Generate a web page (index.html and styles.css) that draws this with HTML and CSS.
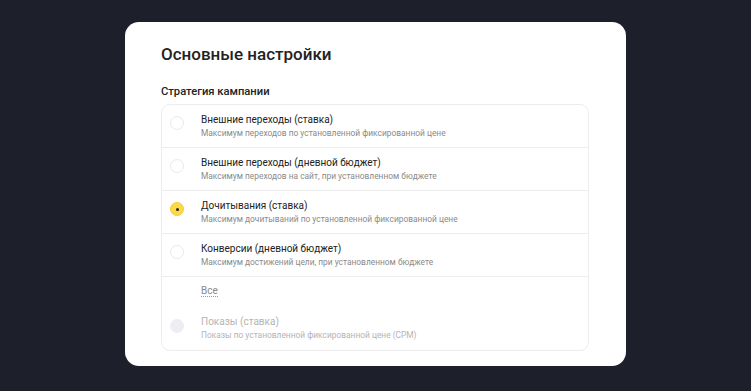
FILE: index.html
```html
<!DOCTYPE html>
<html lang="ru">
<head>
  <meta charset="UTF-8">
  <meta name="viewport" content="width=device-width, initial-scale=1.0">
  <title>Основные настройки</title>
  <link rel="stylesheet" href="styles.css">
</head>
<body>
  <div class="card">
    <h1>Основные настройки</h1>
    <div class="label">Стратегия кампании</div>

    <div class="list">
      <div class="option">
        <span class="radio"></span>
        <div class="text">
          <div class="name">Внешние переходы (ставка)</div>
          <div class="desc">Максимум переходов по установленной фиксированной цене</div>
        </div>
      </div>
      <div class="option">
        <span class="radio"></span>
        <div class="text">
          <div class="name">Внешние переходы (дневной бюджет)</div>
          <div class="desc">Максимум переходов на сайт, при установленном бюджете</div>
        </div>
      </div>
      <div class="option">
        <span class="radio checked"></span>
        <div class="text">
          <div class="name">Дочитывания (ставка)</div>
          <div class="desc">Максимум дочитываний по установленной фиксированной цене</div>
        </div>
      </div>
      <div class="option">
        <span class="radio"></span>
        <div class="text">
          <div class="name">Конверсии (дневной бюджет)</div>
          <div class="desc">Максимум достижений цели, при установленном бюджете</div>
        </div>
      </div>
      <div class="group">
        <div class="all"><span>Все</span></div>
        <div class="option disabled">
          <span class="radio"></span>
          <div class="text">
            <div class="name">Показы (ставка)</div>
            <div class="desc">Показы по установленной фиксированной цене (CPM)</div>
          </div>
        </div>
      </div>
    </div>
  </div>
</body>
</html>
```

FILE: styles.css
```css
body {
  margin: 0;
  font-family: Roboto, "Noto Sans", sans-serif;
  background: #1d1f2b;
  color: #1f1f1f;
  padding-top: 22px;
}

.card {
  width: 501px;
  margin: 0 auto;
  box-sizing: border-box;
  background: #fff;
  border-radius: 14px;
  padding: 20px 37px 15px 36px;
}

h1 {
  margin: 0;
  font-size: 17px;
  font-weight: 500;
  line-height: 24px;
  color: #222;
}

.label {
  margin-top: 18px;
  font-size: 11.2px;
  font-weight: 500;
  line-height: 16px;
  color: #222;
}

.list {
  margin-top: 4px;
  border: 1px solid #ededed;
  border-radius: 9px;
}

.option {
  display: flex;
  align-items: center;
  height: 42px;
  border-bottom: 1px solid #ededed;
}

.group .option {
  border-bottom: none;
}

.radio {
  width: 14px;
  height: 14px;
  border-radius: 50%;
  border: 1px solid #e9e9e9;
  margin: 0 17px 6px 8px;
  flex: none;
  box-sizing: border-box;
  position: relative;
}

.radio.checked {
  background: #fcd947;
  border-color: #f4cf3a;
}

.radio.checked::after {
  content: "";
  position: absolute;
  left: 4.5px;
  top: 4.5px;
  width: 3px;
  height: 3px;
  border-radius: 50%;
  background: #222;
}

.text {
  margin-top: -1px;
}

.name {
  font-size: 10px;
  line-height: 14px;
  color: #222;
}

.desc {
  font-size: 8.4px;
  line-height: 12px;
  color: #8a8a8a;
}

.all {
  padding: 8px 0 0 39px;
  height: 18px;
  font-size: 10px;
  color: #8a8a8a;
}

.all span {
  border-bottom: 1px dotted #9a9a9a;
}

.disabled {
  height: 43px;
  padding-top: 4px;
}

.disabled .radio {
  background: #eceef3;
  border-color: #eceef3;
}

.disabled .name,
.disabled .desc {
  color: #b4b4b4;
}
```
